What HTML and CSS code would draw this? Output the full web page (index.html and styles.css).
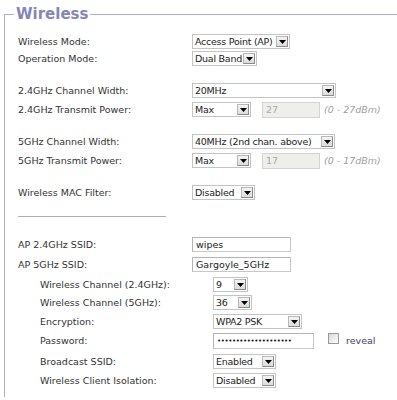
FILE: index.html
```html
<!DOCTYPE html>
<html>
<head>
<meta charset="utf-8">
<link rel="stylesheet" href="styles.css">
</head>
<body>
<fieldset class="section">
  <legend class="title">Wireless</legend>

  <div class="row first">
    <span class="label">Wireless Mode:</span>
    <span class="sel w98"><span class="val">Access Point (AP)</span><span class="btn"><svg width="7" height="4" viewBox="0 0 7 4"><path d="M0 0h7L3.5 4z" fill="#000"/></svg></span></span>
  </div>
  <div class="row">
    <span class="label">Operation Mode:</span>
    <span class="sel w65"><span class="val">Dual Band</span><span class="btn"><svg width="7" height="4" viewBox="0 0 7 4"><path d="M0 0h7L3.5 4z" fill="#000"/></svg></span></span>
  </div>

  <div class="row big">
    <span class="label">2.4GHz Channel Width:</span>
    <span class="sel w144"><span class="val">20MHz</span><span class="btn"><svg width="7" height="4" viewBox="0 0 7 4"><path d="M0 0h7L3.5 4z" fill="#000"/></svg></span></span>
  </div>
  <div class="row sm">
    <span class="label">2.4GHz Transmit Power:</span>
    <span class="sel w59"><span class="val">Max</span><span class="btn"><svg width="7" height="4" viewBox="0 0 7 4"><path d="M0 0h7L3.5 4z" fill="#000"/></svg></span></span>
    <span class="txt dis">27</span>
    <span class="hint">(0 - 27dBm)</span>
  </div>

  <div class="row big">
    <span class="label">5GHz Channel Width:</span>
    <span class="sel w143"><span class="val">40MHz (2nd chan. above)</span><span class="btn"><svg width="7" height="4" viewBox="0 0 7 4"><path d="M0 0h7L3.5 4z" fill="#000"/></svg></span></span>
  </div>
  <div class="row sm">
    <span class="label">5GHz Transmit Power:</span>
    <span class="sel w59"><span class="val">Max</span><span class="btn"><svg width="7" height="4" viewBox="0 0 7 4"><path d="M0 0h7L3.5 4z" fill="#000"/></svg></span></span>
    <span class="txt dis">17</span>
    <span class="hint">(0 - 17dBm)</span>
  </div>

  <div class="row big">
    <span class="label">Wireless MAC Filter:</span>
    <span class="sel w63"><span class="val">Disabled</span><span class="btn"><svg width="7" height="4" viewBox="0 0 7 4"><path d="M0 0h7L3.5 4z" fill="#000"/></svg></span></span>
  </div>

  <div class="divider"></div>

  <div class="row">
    <span class="label">AP 2.4GHz SSID:</span>
    <span class="txt w99">wipes</span>
  </div>
  <div class="row m3">
    <span class="label">AP 5GHz SSID:</span>
    <span class="txt w99">Gargoyle_5GHz</span>
  </div>

  <div class="row sub m3">
    <span class="label">Wireless Channel (2.4GHz):</span>
    <span class="sel w35"><span class="val">9</span><span class="btn"><svg width="7" height="4" viewBox="0 0 7 4"><path d="M0 0h7L3.5 4z" fill="#000"/></svg></span></span>
  </div>
  <div class="row sub m1">
    <span class="label">Wireless Channel (5GHz):</span>
    <span class="sel w39"><span class="val">36</span><span class="btn"><svg width="7" height="4" viewBox="0 0 7 4"><path d="M0 0h7L3.5 4z" fill="#000"/></svg></span></span>
  </div>
  <div class="row sub sm">
    <span class="label">Encryption:</span>
    <span class="sel w89"><span class="val">WPA2 PSK</span><span class="btn"><svg width="7" height="4" viewBox="0 0 7 4"><path d="M0 0h7L3.5 4z" fill="#000"/></svg></span></span>
  </div>
  <div class="row sub sm">
    <span class="label">Password:</span>
    <span class="txt pw">&bull;&bull;&bull;&bull;&bull;&bull;&bull;&bull;&bull;&bull;&bull;&bull;&bull;&bull;&bull;&bull;&bull;&bull;&bull;&bull;</span>
    <span class="check"></span>
    <span class="reveal">reveal</span>
  </div>
  <div class="row sub m4">
    <span class="label">Broadcast SSID:</span>
    <span class="sel w63"><span class="val">Enabled</span><span class="btn"><svg width="7" height="4" viewBox="0 0 7 4"><path d="M0 0h7L3.5 4z" fill="#000"/></svg></span></span>
  </div>
  <div class="row sub sm">
    <span class="label">Wireless Client Isolation:</span>
    <span class="sel w63"><span class="val">Disabled</span><span class="btn"><svg width="7" height="4" viewBox="0 0 7 4"><path d="M0 0h7L3.5 4z" fill="#000"/></svg></span></span>
  </div>
</fieldset>
</body>
</html>
```

FILE: styles.css
```css
html, body {
  margin: 0;
  padding: 0;
  background: #ffffff;
}

body {
  font-family: "DejaVu Sans", Verdana, sans-serif;
  font-size: 9.5px;
  color: #333333;
  overflow: hidden;
  height: 400px;
}

.section {
  margin: 5px 0 0 4px;
  padding: 10px 0 8px 13px;
  border: 1px solid #aeaed2;
  border-right: none;
  border-bottom: none;
  width: 393px;
  box-sizing: border-box;
}

.title {
  margin-left: -4px;
  padding: 0 2px;
  font-size: 15px;
  font-weight: bold;
  color: #8585b8;
  line-height: 18px;
}

.row {
  display: flex;
  align-items: center;
  height: 17px;
}

.row.big { margin-top: 15px; }
.row.sm { margin-top: 2px; }
.row.m1 { margin-top: 1px; }
.row.m3 { margin-top: 3px; }
.row.m4 { margin-top: 4px; }

.label {
  width: 174px;
  flex: none;
  white-space: nowrap;
}

.row.sub {
  padding-left: 22px;
}

.row.sub .label {
  width: 173px;
}

.sel {
  display: inline-flex;
  align-items: center;
  height: 15px;
  box-sizing: border-box;
  border: 1px solid #c4c4c4;
  background: #ffffff;
  color: #222;
  flex: none;
  letter-spacing: -0.25px;
}

.val {
  flex: 1 1 auto;
  min-width: 0;
  padding-left: 2px;
  white-space: nowrap;
  overflow: hidden;
}

.btn {
  width: 12px;
  height: 11px;
  margin-right: 1px;
  box-sizing: border-box;
  background: linear-gradient(#f4f4f4, #dcdcdc);
  border: 1px solid #b8b8b8;
  border-right-color: #8c8c8c;
  border-bottom-color: #8c8c8c;
  display: flex;
  align-items: flex-end;
  justify-content: center;
  padding-bottom: 2px;
  flex: none;
}

.btn svg { display: block; }

.w35 { width: 35px; }
.w39 { width: 39px; }
.w59 { width: 59px; }
.w63 { width: 63px; }
.w65 { width: 65px; }
.w89 { width: 89px; }
.w98 { width: 98px; }
.w143 { width: 143px; }
.w144 { width: 144px; }

.txt {
  display: inline-flex;
  align-items: center;
  height: 16px;
  box-sizing: border-box;
  border: 1px solid #c8c8c8;
  border-top-color: #b4b4b4;
  border-left-color: #b4b4b4;
  padding-left: 3px;
  color: #222;
  flex: none;
  white-space: nowrap;
}

.txt.w99 {
  width: 99px;
  height: 15px;
}

.txt.dis {
  width: 58px;
  margin-left: 11px;
  background: #eeeeea;
  color: #aaaaaa;
  border-color: #d4d4d4;
}

.hint {
  margin-left: 4px;
  font-style: italic;
  color: #a0a0a0;
  white-space: nowrap;
}

.txt.pw {
  width: 101px;
  height: 16px;
  font-size: 7px;
  letter-spacing: -0.4px;
  overflow: hidden;
  color: #111;
}

.check {
  width: 11px;
  height: 11px;
  box-sizing: border-box;
  margin-left: 14px;
  margin-top: -4px;
  border: 1px solid #9a9a9a;
  background: linear-gradient(135deg, #d8d8d8, #ffffff);
  flex: none;
}

.reveal {
  margin-left: 7px;
  color: #444466;
}

.divider {
  width: 148px;
  height: 0;
  border-top: 1px solid #a8a8d0;
  margin: 15px 0 19px 0;
}
```
